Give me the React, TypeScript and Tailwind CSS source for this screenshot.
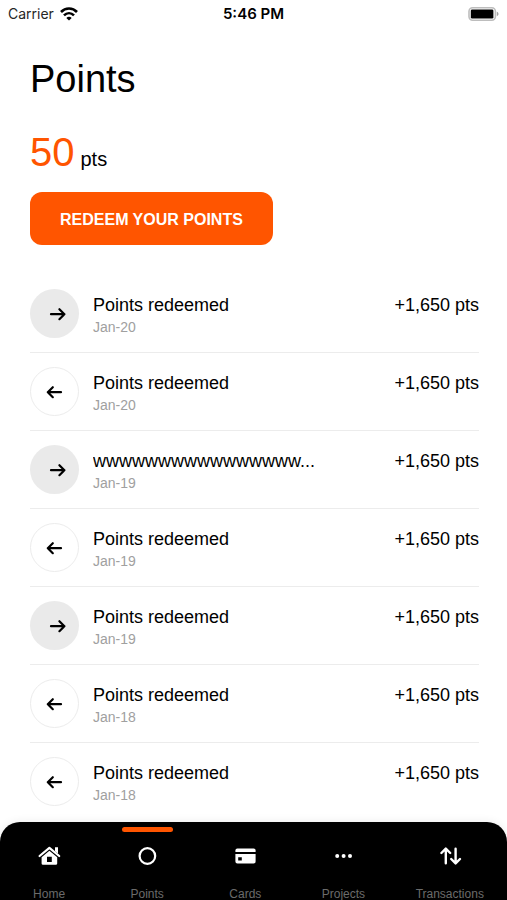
import React from "react";

type Transaction = {
   title: string;
   date: string;
   amount: string;
   incoming: boolean;
};

const transactions: Transaction[] = [
   { title: "Points redeemed", date: "Jan-20", amount: "+1,650 pts", incoming: true },
   { title: "Points redeemed", date: "Jan-20", amount: "+1,650 pts", incoming: false },
   { title: "wwwwwwwwwwwwwwww...", date: "Jan-19", amount: "+1,650 pts", incoming: true },
   { title: "Points redeemed", date: "Jan-19", amount: "+1,650 pts", incoming: false },
   { title: "Points redeemed", date: "Jan-19", amount: "+1,650 pts", incoming: true },
   { title: "Points redeemed", date: "Jan-18", amount: "+1,650 pts", incoming: false },
   { title: "Points redeemed", date: "Jan-18", amount: "+1,650 pts", incoming: false },
];

const WifiIcon = () => (
   <svg className="w-[18px] h-[14px]" viewBox="0 0 18 14" fill="none" stroke="black" strokeWidth="2.6">
      <path d="M1 5C5.4 0.4 12.6 0.4 17 5" />
      <path d="M4 8.4C6.9 5.5 11.1 5.5 14 8.4" />
      <path d="M9 13.6L6.3 10.9C7.8 9.5 10.2 9.5 11.7 10.9Z" fill="black" stroke="none" />
   </svg>
);

const BatteryIcon = () => (
   <svg className="w-[31px] h-[14px]" viewBox="0 0 31 14">
      <rect x="1" y="0.8" width="26.4" height="12.4" rx="3.6" fill="white" stroke="#bdbdbd" strokeWidth="1.6" />
      <rect x="2.8" y="2.4" width="22.6" height="9.2" rx="1.4" fill="black" />
      <path d="M28.8 4.8V9.2C29.8 8.9 30.5 8 30.5 7S29.8 5.1 28.8 4.8Z" fill="#a3a3a3" />
   </svg>
);

const ArrowIcon = ({ incoming }: { incoming: boolean }) => (
   <svg className="w-6 h-6" viewBox="0 0 24 24" fill="none" stroke="black" strokeWidth="2.2" strokeLinecap="round" strokeLinejoin="round">
      {incoming ? (
         <path d="M8 12.2H21.4M16.4 7.2L21.4 12.2L16.4 17.2" />
      ) : (
         <path d="M18 12.2H4.8M9.8 7.2L4.8 12.2L9.8 17.2" />
      )}
   </svg>
);

const HomeIcon = () => (
   <svg className="w-6 h-6" viewBox="0 0 24 24">
      <path d="M2.6 12L12.4 3.8L22.2 12" fill="none" stroke="white" strokeWidth="2.2" strokeLinecap="round" strokeLinejoin="round" />
      <path d="M18 3.2H21V9.6L18 7.2Z" fill="white" />
      <path fillRule="evenodd" d="M12.4 6.8L20.2 13.2V19.4Q20.2 20.8 18.8 20.8H6Q4.6 20.8 4.6 19.4V13.2ZM10 12.8V18H14.8V12.8Z" fill="white" />
   </svg>
);

const CircleIcon = () => (
   <svg className="w-6 h-6" viewBox="0 0 24 24" fill="none" stroke="white" strokeWidth="2.2">
      <circle cx="12.4" cy="12" r="7.8" />
   </svg>
);

const CardIcon = () => (
   <svg className="w-6 h-6" viewBox="0 0 24 24">
      <path d="M2.4 8V6.6Q2.4 4.6 4.4 4.6H20.6Q22.6 4.6 22.6 6.6V8Z" fill="white" />
      <path fillRule="evenodd" d="M2.4 10H22.6V17.4Q22.6 19.4 20.6 19.4H4.4Q2.4 19.4 2.4 17.4ZM5.2 13.2V16.4H8.8V13.2Z" fill="white" />
   </svg>
);

const DotsIcon = () => (
   <svg className="w-6 h-6" viewBox="0 0 24 24" fill="white">
      <circle cx="6.2" cy="12" r="2" />
      <circle cx="12.6" cy="12" r="2" />
      <circle cx="19" cy="12" r="2" />
   </svg>
);

const SwapIcon = () => (
   <svg className="w-6 h-6" viewBox="0 0 24 24" fill="none" stroke="white" strokeWidth="2.4" strokeLinecap="round" strokeLinejoin="round">
      <path d="M7.8 19.2V5M3.4 9L7.8 4.6L12.2 9" />
      <path d="M17.6 4.8V19M13.2 15L17.6 19.4L22 15" />
   </svg>
);

const tabs = [
   { label: "Home", icon: <HomeIcon />, active: false },
   { label: "Points", icon: <CircleIcon />, active: true },
   { label: "Cards", icon: <CardIcon />, active: false },
   { label: "Projects", icon: <DotsIcon />, active: false },
   { label: "Transactions", icon: <SwapIcon />, active: false },
];

const App: React.FC = () => {
   return (
      <div className="h-screen flex flex-col overflow-hidden bg-white text-black font-['Liberation_Sans',sans-serif]">
         {/* Status bar */}
         <div className="shrink-0 grid grid-cols-3 items-center h-7 px-2 font-['Inter',sans-serif] text-sm">
            <div className="flex items-center gap-1.5 text-neutral-800">
               <span>Carrier</span>
               <WifiIcon />
            </div>
            <span className="text-center text-[15px] font-semibold">5:46 PM</span>
            <div className="flex justify-end">
               <BatteryIcon />
            </div>
         </div>

         <main className="flex-1 min-h-0 overflow-hidden pl-[30px] pr-7 pt-7">
            <h1 className="text-[38px] leading-[46px]">Points</h1>
            <p className="mt-[26px] flex items-baseline gap-1.5">
               <span className="text-[40px] leading-[48px] text-[#ff5500]">50</span>
               <span className="text-xl">pts</span>
            </p>
            <button className="mt-4 h-[53px] px-[30px] pt-0.5 rounded-xl bg-[#ff5500] text-white text-base font-bold">
               REDEEM YOUR POINTS
            </button>

            <ul className="mt-[30px]">
               {transactions.map((item, i) => (
                  <li key={i} className="flex items-start gap-3.5 py-3.5 border-b border-[#ececec] last:border-b-0">
                     <span
                        className={`shrink-0 w-[49px] h-[49px] rounded-full flex items-center justify-center ${
                           item.incoming ? "bg-[#eaeaea]" : "bg-white border border-[#ececec]"
                        }`}
                     >
                        <ArrowIcon incoming={item.incoming} />
                     </span>
                     <div className="flex-1 min-w-0 pt-1">
                        <p className="text-lg leading-6 truncate">{item.title}</p>
                        <p className="text-sm leading-5 text-[#a0a0a0]">{item.date}</p>
                     </div>
                     <span className="shrink-0 pt-1 text-lg leading-6">{item.amount}</span>
                  </li>
               ))}
            </ul>
         </main>

         {/* Tab bar */}
         <nav className="shrink-0 grid grid-cols-[6fr_6fr_6fr_6fr_7fr] rounded-t-[20px] bg-black shadow-[0_0_10px_rgba(0,0,0,0.08)]">
            {tabs.map((tab) => (
               <a key={tab.label} href="#" className="flex flex-col items-center pt-[5px]">
                  <span className={`w-[51px] h-[5px] rounded-full ${tab.active ? "bg-[#ff5500]" : ""}`}></span>
                  <span className="mt-3">{tab.icon}</span>
                  <span className="mt-5 text-xs leading-3 text-[#6b6b6b]">{tab.label}</span>
               </a>
            ))}
         </nav>
      </div>
   );
};

export default App;
